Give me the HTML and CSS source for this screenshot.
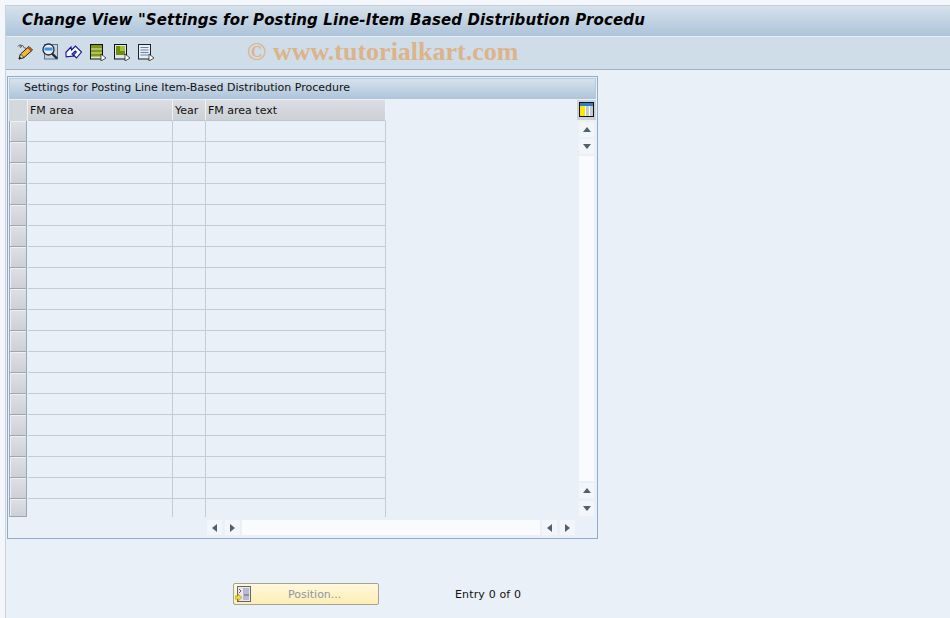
FILE: index.html
```html
<!DOCTYPE html>
<html lang="en">
<head>
<meta charset="utf-8">
<title>Change View</title>
<link rel="stylesheet" href="styles.css">
</head>
<body>
<div class="screen">
  <header class="titlebar"><h1>Change View "Settings for Posting Line-Item Based Distribution Procedu</h1></header>
  <nav class="toolbar">
    <svg class="tool" viewBox="0 0 18 18"><path d="M1 3.500c1-2 3-2 3.500-.5s-2 2-1.500.5 3-1.500 3.500 0 1 2 2.500 1.500" fill="none" stroke="#555" stroke-width="1"/><path d="M2 16l1.500-5L12 3.500l3.500 3.500-8.500 7.500z" fill="#f7b53a" stroke="#222" stroke-width="1"/><path d="M2 16l1.500-5 3.500 3.500z" fill="#f5e4c3" stroke="#222" stroke-width=".8"/><path d="M2 16l.7-2.400 1.700 1.700z" fill="#111"/><path d="M11 4.500l3.500 3.500" stroke="#c2410c" stroke-width="1.400"/></svg>
    <svg class="tool" viewBox="0 0 18 18"><rect x="3.500" y="1.500" width="13" height="14.500" fill="#c9d3dd" stroke="#5f6f86"/><circle cx="7.500" cy="6.500" r="5.500" fill="#e6eef6" stroke="#1c2b3a" stroke-width="1.300"/><path d="M3.500 4.500h8v3h-8z" fill="#3d8fe6"/><path d="M11 10.500l5 5" stroke="#1c2b3a" stroke-width="2.400"/></svg>
    <svg class="tool" viewBox="0 0 18 18"><path d="M.8 9.500L6 4l.5 3L10.500 3 16.500 9l-5 6-3-3 2.800-3-1-1-3.300 3 1.700 2-7.500.8z" fill="#f4f7fb" stroke="#14149a" stroke-width="1.100"/></svg>
    <svg class="tool" viewBox="0 0 18 18"><rect x="1.500" y="1.500" width="12" height="14.500" fill="#dfe6c8" stroke="#111"/><rect x="2" y="2" width="11" height="3.500" fill="#7f9a10"/><rect x="2" y="6.500" width="11" height="3" fill="#7f9a10"/><rect x="2" y="10.500" width="11" height="3" fill="#7f9a10"/><path d="M12 11l5 4-5 3z" fill="#fff" stroke="#111" stroke-width=".7"/></svg>
    <svg class="tool" viewBox="0 0 18 18"><rect x="1.500" y="1.500" width="12" height="14.500" fill="#dfe6ec" stroke="#111"/><rect x="3" y="3" width="9" height="9" fill="#6f8e10"/><path d="M7 3h5v5H7z" fill="#a9c13a"/><path d="M12 11l5 4-5 3z" fill="#fff" stroke="#111" stroke-width=".7"/></svg>
    <svg class="tool" viewBox="0 0 18 18"><rect x="1.500" y="1.500" width="12" height="14.500" fill="#e8eef3" stroke="#222"/><path d="M3.500 4.500h8M3.500 7h8M3.500 9.500h8M3.500 12h8" stroke="#5f86ad" stroke-width="1.200"/><path d="M12 11l5 4-5 3z" fill="#fff" stroke="#111" stroke-width=".7"/></svg>
    <span class="watermark">© www.tutorialkart.com</span>
  </nav>
  <main class="content">
    <section class="panel">
      <div class="panel-title">Settings for Posting Line Item-Based Distribution Procedure</div>
      <div class="panel-body">
        <div class="table-area">
          <div class="grid">
            <div class="sel head"></div><div class="hcell">FM area</div><div class="hcell">Year</div><div class="hcell">FM area text</div>
            <div class="sel"></div><div class="cell"></div><div class="cell"></div><div class="cell"></div>
            <div class="sel"></div><div class="cell"></div><div class="cell"></div><div class="cell"></div>
            <div class="sel"></div><div class="cell"></div><div class="cell"></div><div class="cell"></div>
            <div class="sel"></div><div class="cell"></div><div class="cell"></div><div class="cell"></div>
            <div class="sel"></div><div class="cell"></div><div class="cell"></div><div class="cell"></div>
            <div class="sel"></div><div class="cell"></div><div class="cell"></div><div class="cell"></div>
            <div class="sel"></div><div class="cell"></div><div class="cell"></div><div class="cell"></div>
            <div class="sel"></div><div class="cell"></div><div class="cell"></div><div class="cell"></div>
            <div class="sel"></div><div class="cell"></div><div class="cell"></div><div class="cell"></div>
            <div class="sel"></div><div class="cell"></div><div class="cell"></div><div class="cell"></div>
            <div class="sel"></div><div class="cell"></div><div class="cell"></div><div class="cell"></div>
            <div class="sel"></div><div class="cell"></div><div class="cell"></div><div class="cell"></div>
            <div class="sel"></div><div class="cell"></div><div class="cell"></div><div class="cell"></div>
            <div class="sel"></div><div class="cell"></div><div class="cell"></div><div class="cell"></div>
            <div class="sel"></div><div class="cell"></div><div class="cell"></div><div class="cell"></div>
            <div class="sel"></div><div class="cell"></div><div class="cell"></div><div class="cell"></div>
            <div class="sel"></div><div class="cell"></div><div class="cell"></div><div class="cell"></div>
            <div class="sel"></div><div class="cell"></div><div class="cell"></div><div class="cell"></div>
            <div class="sel last"></div><div class="cell last"></div><div class="cell last"></div><div class="cell last"></div>
          </div>
          <div class="vscroll">
            <div class="col-config"><svg viewBox="0 0 15 15" width="15" height="15" shape-rendering="crispEdges"><rect width="15" height="15" fill="#111"/><rect x="1" y="1" width="13" height="13" fill="#fff"/><rect x="1" y="1" width="13" height="3" fill="#2f7fc8"/><rect x="1" y="4" width="5" height="10" fill="#ffe600"/><rect x="7" y="4" width="3" height="10" fill="#c3cad1"/><rect x="11" y="4" width="3" height="10" fill="#c3cad1"/></svg></div>
            <div class="sbtn"><span class="arrow up"></span></div>
            <div class="sbtn"><span class="arrow down"></span></div>
            <div class="vtrack"></div>
            <div class="sbtn"><span class="arrow up"></span></div>
            <div class="sbtn spaced"><span class="arrow down"></span></div>
          </div>
        </div>
        <div class="hscroll">
          <div class="sbtn"><span class="arrow left"></span></div>
          <div class="sbtn"><span class="arrow right"></span></div>
          <div class="htrack"></div>
          <div class="sbtn"><span class="arrow left"></span></div>
          <div class="sbtn"><span class="arrow right"></span></div>
        </div>
      </div>
    </section>
    <div class="actions">
      <button class="position" type="button">
        <svg class="pos-icon" viewBox="0 0 16 17" width="16" height="17"><rect x="2.500" y=".5" width="13" height="15" fill="#e8e8ee" stroke="#666"/><rect x="8" y="2" width="6" height="12" fill="#b9b9d2"/><path d="M4 3l2 2-2 2M9 9h5" fill="none" stroke="#666"/><path d="M0 10h3V8l4 3.500L3 15v-2H0z" fill="#f6d63c" stroke="#a58a10" stroke-width=".6"/></svg>
        <span>Position...</span>
      </button>
      <span class="entry">Entry 0 of 0</span>
    </div>
  </main>
</div>
</body>
</html>
```
FILE: styles.css
```css
* { box-sizing: border-box; }
html, body { margin: 0; padding: 0; height: 100%; }
body {
  background: #f3f6fa;
  font-family: "DejaVu Sans", sans-serif;
  font-size: 11px;
  color: #111;
  overflow: hidden;
}
.screen {
  margin: 5px 0 0 5px;
  height: 613px;
  border-top: 1px solid #c4d0dc;
  border-left: 1px solid #c9d2dc;
  background: #e9f0f7;
  display: flex;
  flex-direction: column;
}
.titlebar {
  height: 31px;
  flex: none;
  background: linear-gradient(#d6e1eb, #adc4da);
  border-bottom: 1px solid #e6eef5;
  display: flex;
  align-items: center;
  padding: 0 0 2px 16px;
}
.titlebar h1 {
  margin: 0;
  font: italic 700 15px "DejaVu Sans", sans-serif;
  letter-spacing: .13px;
  color: #000;
  white-space: nowrap;
}
.toolbar {
  position: relative;
  height: 33px;
  flex: none;
  background: #cfdde8;
  border-bottom: 1px solid #9fb3c6;
  display: flex;
  align-items: center;
  gap: 6px;
  padding: 0 0 2px 11px;
}
.tool { width: 18px; height: 18px; flex: none; }
.watermark {
  position: absolute;
  left: 241px;
  top: 0;
  font: 700 26px "Liberation Serif", serif;
  color: #e2a66b;
  opacity: .75;
  white-space: nowrap;
}
.content { flex: 1; padding: 6px 0 0 1px; display: flex; flex-direction: column; }
.panel {
  width: 591px;
  height: 463px;
  flex: none;
  border: 1px solid #8fabc8;
  display: flex;
  flex-direction: column;
}
.panel-title {
  height: 21px;
  flex: none;
  margin: 1px 1px 0;
  border: 1px solid #b6c8d9;
  border-bottom: 0;
  padding: 0 0 0 14px;
  background: linear-gradient(#d7e2ec, #adc4da);
  line-height: 18px;
  white-space: nowrap;
}
.panel-body { flex: 1; display: flex; flex-direction: column; padding: 1px 0 0 1px; }
.table-area { display: flex; height: 417px; flex: none; }
.grid {
  width: 568px;
  display: grid;
  grid-template-columns: 19px 145px 33px 180px;
  align-content: start;
}
.sel, .hcell, .cell { height: 21px; }
.sel {
  width: 18px;
  background: linear-gradient(#dde0e4, #cdd1d6);
  border: 1px solid #9ca7b5;
  border-top: 0;
  box-shadow: inset 1px 1px 0 #eef1f4;
}
.sel.head { width: 19px; background: #d3d8dd; border: 0; border-right: 1px solid #f0f3f6; box-shadow: none; }
.hcell {
  background: linear-gradient(#dadde1, #ccd1d6);
  border-right: 1px solid #f0f3f6;
  border-bottom: 1px solid #bcc6d1;
  padding-left: 2px;
  line-height: 21px;
  white-space: nowrap;
}
.cell {
  border-right: 1px solid #c3ccd6;
  border-bottom: 1px solid #c3ccd6;
}
.sel.last, .cell.last { height: 18px; }
.cell.last { border-bottom: 0; }
.vscroll { width: 19px; display: flex; flex-direction: column; align-items: center; gap: 2px; padding-bottom: 1px; }
.col-config {
  width: 19px;
  height: 20px;
  background: #ccd2d8;
  display: flex;
  align-items: flex-start;
  justify-content: center;
  padding-top: 2px;
  flex: none;
}
.sbtn {
  width: 15px;
  height: 15px;
  flex: none;
  background: #f2f5f9;
  display: flex;
  align-items: center;
  justify-content: center;
}
.sbtn.spaced { margin-top: 1px; }
.vscroll .sbtn { padding-bottom: 1px; }
.vtrack { flex: 1; width: 15px; background: #f9fbfd; }
.arrow { width: 0; height: 0; border-style: solid; border-color: transparent; }
.arrow.up { border-width: 0 4.500px 5px; border-bottom-color: #4f6070; }
.arrow.down { border-width: 5px 4.500px 0; border-top-color: #4f6070; }
.arrow.left { border-width: 4.500px 5px 4.500px 0; border-right-color: #4f6070; }
.arrow.right { border-width: 4.500px 0 4.500px 5px; border-left-color: #4f6070; }
.hscroll {
  display: flex;
  gap: 3px;
  padding: 3px 0 0 198px;
}
.hscroll .htrack { width: 298px; height: 15px; margin: 0 -1px; background: #f9fbfd; }
.actions { display: flex; align-items: center; margin-top: 44px; padding-left: 226px; }
.position {
  width: 146px;
  height: 22px;
  padding: 0 0 0 1px;
  display: flex;
  align-items: center;
  border: 1px solid #a3a39b;
  border-radius: 2px;
  background: linear-gradient(#fff8dc, #fdeeb5);
  font: 11px "DejaVu Sans", sans-serif;
  color: #8f96a3;
}
.pos-icon { flex: none; }
.position span { margin-left: 37px; }
.entry { margin-left: 76px; letter-spacing: .15px; }
```
